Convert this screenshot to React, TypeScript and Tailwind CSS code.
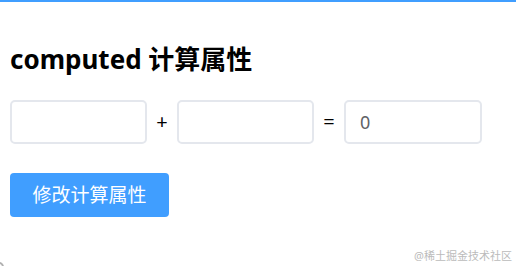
import { useState } from "react";

const font = { fontFamily: '"Noto Sans", "Noto Sans CJK SC", sans-serif' };

export default function App() {
  const [a, setA] = useState("");
  const [b, setB] = useState("");
  const sum = (Number(a) || 0) + (Number(b) || 0);

  return (
    <div className="relative w-[516px] h-[266px] bg-white overflow-hidden border-t-2 border-[#409eff]" style={font}>
      <div className="px-[10px] pt-[40px]">
        <h1 className="text-[26px] leading-[34px] font-bold text-black">computed 计算属性</h1>

        <div className="flex items-center mt-[24px] gap-[9px]">
          <input
            value={a}
            onChange={(e) => setA(e.target.value)}
            className="w-[137px] h-[44px] border-2 border-[#e4e7ed] rounded-[5px] px-[14px] text-[18px] text-[#606266] outline-none"
          />
          <span className="w-[12px] text-center text-[20px] text-black">+</span>
          <input
            value={b}
            onChange={(e) => setB(e.target.value)}
            className="w-[137px] h-[44px] border-2 border-[#e4e7ed] rounded-[5px] px-[14px] text-[18px] text-[#606266] outline-none"
          />
          <span className="w-[12px] text-center text-[20px] text-black">=</span>
          <input
            readOnly
            value={sum}
            className="w-[138px] h-[44px] border-2 border-[#e4e7ed] rounded-[5px] px-[14px] text-[18px] text-[#606266] outline-none"
          />
        </div>

        <button
          onClick={() => setA(String((Number(a) || 0) + 1))}
          className="mt-[29px] w-[159px] h-[44px] rounded-[4px] bg-[#409eff] text-white text-[19px]"
        >
          修改计算属性
        </button>
      </div>

      <span className="absolute right-[4px] bottom-[2px] text-[11px] text-[#bbbbbb]">@稀土掘金技术社区</span>
      <span className="absolute left-[-6px] bottom-[-6px] w-[10px] h-[10px] rounded-full border-2 border-[#b0b0b0]" />
    </div>
  );
}
